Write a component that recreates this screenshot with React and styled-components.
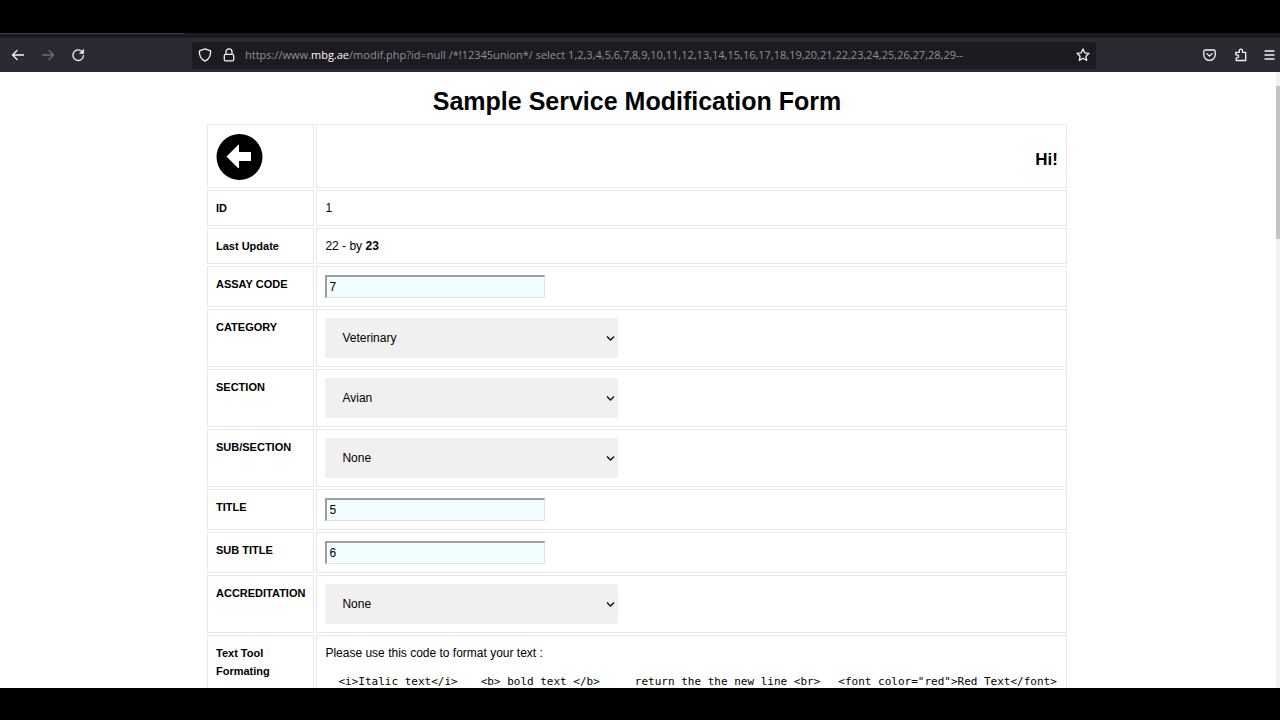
import React, {useState} from "react";
import styled, {createGlobalStyle} from "styled-components";

const GlobalStyle = createGlobalStyle`
  * {
    box-sizing: border-box;
  }
  body {
    margin: 0;
    background: #000;
    color: #000;
    font-family: "Liberation Sans", Arial, sans-serif;
    font-size: 12px;
    line-height: 18px;
  }
`;

const Screen = styled.div`
  display: flex;
  flex-direction: column;
  height: 100vh;
  padding: 33px 0 32px;
`;

const TabStrip = styled.div`
  flex: none;
  height: 5px;
  background: #1c1b22;
`;

const ActiveTab = styled.div`
  width: 184px;
  height: 1px;
  background: #34414f;
`;

const Toolbar = styled.header`
  display: flex;
  flex: none;
  align-items: center;
  justify-content: space-between;
  height: 34px;
  padding-left: 10px;
  background: #2b2a33;
`;

const ToolGroup = styled.div`
  display: flex;
  gap: ${props => props.gap};
`;

const ToolButton = styled.button`
  display: flex;
  padding: 0;
  border: 0;
  background: none;
  color: #f2f2f6;
  svg {
    width: 16px;
    height: 16px;
    fill: none;
    stroke: currentColor;
    stroke-width: 1.3;
    stroke-linecap: round;
    stroke-linejoin: round;
  }
  &:disabled {
    color: #6d6c75;
  }
`;

const AddressBar = styled.div`
  display: flex;
  flex: 1;
  align-items: center;
  gap: 8px;
  height: 27px;
  margin: 0 106px;
  padding: 0 5px;
  border-radius: 2px;
  background: #1c1b22;
`;

const Address = styled.div`
  flex: 1;
  overflow: hidden;
  color: #92919a;
  font-family: "Open Sans", "Noto Sans", sans-serif;
  font-size: 11px;
  white-space: nowrap;
  b {
    color: #fbfbfe;
    font-weight: 500;
  }
`;

const Viewport = styled.div`
  display: flex;
  flex: 1;
  min-height: 0;
  background: #fff;
`;

const Page = styled.main`
  flex: 1;
  overflow: hidden;
  padding: 14px 2px 0 0;
`;

const ScrollTrack = styled.div`
  width: 4px;
  padding-top: 14px;
  background: #f1f1f1;
`;

const ScrollThumb = styled.div`
  height: 153px;
  background: #c4c4c4;
`;

const Title = styled.h1`
  margin: 0 0 6px;
  font-size: 25px;
  line-height: 30px;
  text-align: center;
`;

const FormTable = styled.table`
  width: 864px;
  max-width: 100%;
  margin: 0 auto;
  border-spacing: 2px;
`;

const Cell = styled.td`
  padding: 8px;
  border: 1px solid #e8e8e8;
  text-align: left;
  vertical-align: top;
`;

const LabelCell = styled(Cell)`
  width: 107px;
  font-size: 11px;
  font-weight: bold;
`;

const BackLink = styled.a`
  display: block;
  height: 46px;
  svg {
    display: block;
    width: 47px;
    height: 47px;
  }
`;

const Greeting = styled.h2`
  margin: 16px 0 0;
  font-size: 17px;
  line-height: 22px;
  text-align: right;
`;

const TextInput = styled.input`
  display: block;
  width: 220px;
  height: 23px;
  padding: 0 2px;
  border: 1px solid #dfe3e3;
  border-top: 2px solid #9c9fa0;
  border-left: 2px solid #9c9fa0;
  background: #f2fdff;
  font: inherit;
`;

const SelectBox = styled.div`
  position: relative;
  width: 293px;
  svg {
    position: absolute;
    top: 17px;
    right: 3px;
    width: 9px;
    height: 7px;
    fill: none;
    stroke: #111;
    stroke-width: 1.4;
    pointer-events: none;
  }
`;

const Select = styled.select`
  display: block;
  width: 100%;
  height: 40px;
  padding: 0 17px;
  border: 0;
  border-radius: 2px;
  background: #f0f0f0;
  color: #000;
  font: inherit;
  appearance: none;
`;

const CodeSamples = styled.div`
  display: flex;
  margin: 14px 0 18px;
  padding-left: 13px;
  font-family: "DejaVu Sans Mono", monospace;
  font-size: 11px;
  line-height: 12px;
  white-space: nowrap;
`;

const Code = styled.code`
  margin-right: ${props => props.space || "0"};
  font: inherit;
`;

function TextRow({id, label, initial}) {
  const [value, setValue] = useState(initial);
  return (
    <tr>
      <LabelCell as="th" scope="row">
        <label htmlFor={id}>{label}</label>
      </LabelCell>
      <Cell>
        <TextInput
          id={id}
          type="text"
          value={value}
          onChange={e => setValue(e.target.value)}
        />
      </Cell>
    </tr>
  );
}

function SelectRow({id, label, option}) {
  return (
    <tr>
      <LabelCell as="th" scope="row">
        <label htmlFor={id}>{label}</label>
      </LabelCell>
      <Cell>
        <SelectBox>
          <Select id={id}>
            <option>{option}</option>
          </Select>
          <svg viewBox="0 0 9 7">
            <path d="M1 1.5l3.5 3.5L8 1.5" />
          </svg>
        </SelectBox>
      </Cell>
    </tr>
  );
}

function BrowserBar() {
  return (
    <>
      <TabStrip>
        <ActiveTab />
      </TabStrip>
      <Toolbar>
        <ToolGroup gap="14px">
          <ToolButton aria-label="Back">
            <svg viewBox="0 0 16 16">
              <path d="M13.5 8h-11M7 3.5L2.5 8 7 12.5" />
            </svg>
          </ToolButton>
          <ToolButton aria-label="Forward" disabled>
            <svg viewBox="0 0 16 16">
              <path d="M2.5 8h11M9 3.5L13.5 8 9 12.5" />
            </svg>
          </ToolButton>
          <ToolButton aria-label="Reload">
            <svg viewBox="0 0 16 16">
              <path d="M12.6 5.2A5.3 5.3 0 1 0 13.5 8.6" />
              <path d="M13.6 2.6v3.8H9.8z" fill="currentColor" strokeWidth="0.6" />
            </svg>
          </ToolButton>
        </ToolGroup>
        <AddressBar>
          <ToolButton aria-label="Tracking protection">
            <svg viewBox="0 0 16 16">
              <path d="M8 1.8l5.6 2c.3 4.6-1.4 8.4-5.6 10.4C3.800 12.200 2.100 8.400 2.400 3.800z" />
            </svg>
          </ToolButton>
          <ToolButton aria-label="Site information">
            <svg viewBox="0 0 16 16">
              <rect x="3.3" y="7.3" width="9.4" height="6.5" rx="1.3" />
              <path d="M5 7.3V4.8a3 3 0 0 1 6 0v2.500" />
            </svg>
          </ToolButton>
          <Address>
            https://www.<b>mbg.ae</b>/modif.php?id=null /*!12345union*/ select
            1,2,3,4,5,6,7,8,9,10,11,12,13,14,15,16,17,18,19,20,21,22,23,24,25,26,27,28,29--
          </Address>
          <ToolButton aria-label="Bookmark this page">
            <svg viewBox="0 0 16 16">
              <path d="M8 1.900l1.800 3.900 4.200.5-3.100 2.900.8 4.200L8 11.300l-3.700 2.100.8-4.200L2 6.300l4.200-.5z" />
            </svg>
          </ToolButton>
        </AddressBar>
        <ToolGroup gap="15px">
          <ToolButton aria-label="Save to Pocket">
            <svg viewBox="0 0 16 16">
              <path d="M3.300 3h8.400c.9 0 1.500.6 1.500 1.500v3.200a5.700 5.700 0 0 1-11.400 0V4.500C1.800 3.600 2.400 3 3.300 3z" />
              <path d="M4.900 6.600l2.600 2.500 2.600-2.500" />
            </svg>
          </ToolButton>
          <ToolButton aria-label="Extensions">
            <svg viewBox="0 0 16 16">
              <path d="M3.200 13.500v-2.700h1a1.400 1.400 0 0 0 0-2.900h-1.400V5.300h3.500V3.700a1.600 1.600 0 0 1 3.200 0v1.600h3.200v8.200z" />
            </svg>
          </ToolButton>
          <ToolButton aria-label="Open application menu">
            <svg viewBox="0 0 16 16">
              <path d="M1 4h9M1 8h9M1 12h9" />
            </svg>
          </ToolButton>
        </ToolGroup>
      </Toolbar>
    </>
  );
}

export default function App() {
  return (
    <Screen>
      <GlobalStyle />
      <BrowserBar />
      <Viewport>
        <Page>
          <Title>Sample Service Modification Form</Title>
          <FormTable>
            <tbody>
              <tr>
                <LabelCell>
                  <BackLink href="#" aria-label="Back">
                    <svg viewBox="0 0 47 47">
                      <circle cx="23.5" cy="24" r="23" />
                      <path
                        d="M10.5 23.5L22 12q1-.8 1 .5v6.500h12v9H23v6.500q0 1.300-1 .5z"
                        fill="#fff"
                      />
                    </svg>
                  </BackLink>
                </LabelCell>
                <Cell>
                  <Greeting>Hi!</Greeting>
                </Cell>
              </tr>
              <tr>
                <LabelCell as="th" scope="row">ID</LabelCell>
                <Cell>1</Cell>
              </tr>
              <tr>
                <LabelCell as="th" scope="row">Last Update</LabelCell>
                <Cell>
                  22 - by <b>23</b>
                </Cell>
              </tr>
              <TextRow id="assay" label="ASSAY CODE" initial="7" />
              <SelectRow id="category" label="CATEGORY" option="Veterinary" />
              <SelectRow id="section" label="SECTION" option="Avian" />
              <SelectRow id="subsection" label="SUB/SECTION" option="None" />
              <TextRow id="title" label="TITLE" initial="5" />
              <TextRow id="subtitle" label="SUB TITLE" initial="6" />
              <SelectRow id="accreditation" label="ACCREDITATION" option="None" />
              <tr>
                <LabelCell as="th" scope="row">Text Tool Formating</LabelCell>
                <Cell>
                  Please use this code to format your text :
                  <CodeSamples>
                    <Code space="23px">{"<i>Italic text</i>"}</Code>
                    <Code space="35px">{"<b> bold text </b>"}</Code>
                    <Code space="18px">{"return the the new line <br>"}</Code>
                    <Code>{'<font color="red">Red Text</font>'}</Code>
                  </CodeSamples>
                </Cell>
              </tr>
            </tbody>
          </FormTable>
        </Page>
        <ScrollTrack>
          <ScrollThumb />
        </ScrollTrack>
      </Viewport>
    </Screen>
  );
}
